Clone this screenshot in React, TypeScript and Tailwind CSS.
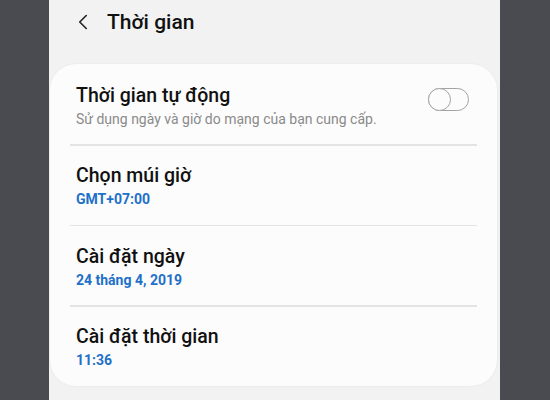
import { ChevronLeft } from 'lucide-react'

interface RowProps {
  title: string
  sub: string
  blue?: boolean
  toggle?: boolean
  last?: boolean
}

const Row = ({ title, sub, blue = false, toggle = false, last = false }: RowProps) => (
  <div className="mx-[20px]">
    <div className="h-[79px] flex items-center justify-between pl-[6px] pr-[8px] pt-[2px]">
      <div className="flex flex-col">
        <span className="text-[19.5px] leading-[23px] font-medium text-[#111]">{title}</span>
        <span
          className={
            blue
              ? 'text-[14px] leading-[17px] font-bold text-[#1f70c8] mt-[4px]'
              : 'text-[14px] leading-[17px] text-[#8a8a8a] mt-[4px]'
          }
        >
          {sub}
        </span>
      </div>
      {toggle && (
        <div className="relative w-[41px] h-[23px] rounded-full border-[1.5px] border-[#a3a3a3] mb-[12px]">
          <div className="absolute -left-[1.5px] -top-[1.5px] w-[23px] h-[23px] rounded-full border-[1.5px] border-[#a3a3a3] bg-[#fcfcfc]" />
        </div>
      )}
    </div>
    {!last && <div className="h-[1.5px] bg-[#e4e4e4]" />}
  </div>
)

export default function App() {
  return (
    <div className="w-[550px] h-[400px] flex overflow-hidden" style={{ fontFamily: 'Roboto, "Noto Sans", sans-serif' }}>
      <div className="w-[49px] bg-[#4a4b50]" />
      <div className="flex-1 bg-[#f2f2f2] flex flex-col">
        {/* Header */}
        <div className="h-[64px] flex items-start pt-[8px]">
          <ChevronLeft className="w-[26px] h-[26px] ml-[21px] mt-[1px] text-[#222]" strokeWidth={1.5} />
          <span className="ml-[11px] text-[21px] leading-[28px] font-medium text-[#111]">Thời gian</span>
        </div>

        {/* Card */}
        <div className="ml-px mr-[3px] rounded-[26px] bg-[#fcfcfc] shadow-[0_0_2px_rgba(0,0,0,0.08)] pt-px">
          <Row title="Thời gian tự động" sub="Sử dụng ngày và giờ do mạng của bạn cung cấp." toggle />
          <Row title="Chọn múi giờ" sub="GMT+07:00" blue />
          <Row title="Cài đặt ngày" sub="24 tháng 4, 2019" blue />
          <Row title="Cài đặt thời gian" sub="11:36" blue last />
        </div>
      </div>
      <div className="w-[50px] bg-[#4a4b50]" />
    </div>
  )
}
